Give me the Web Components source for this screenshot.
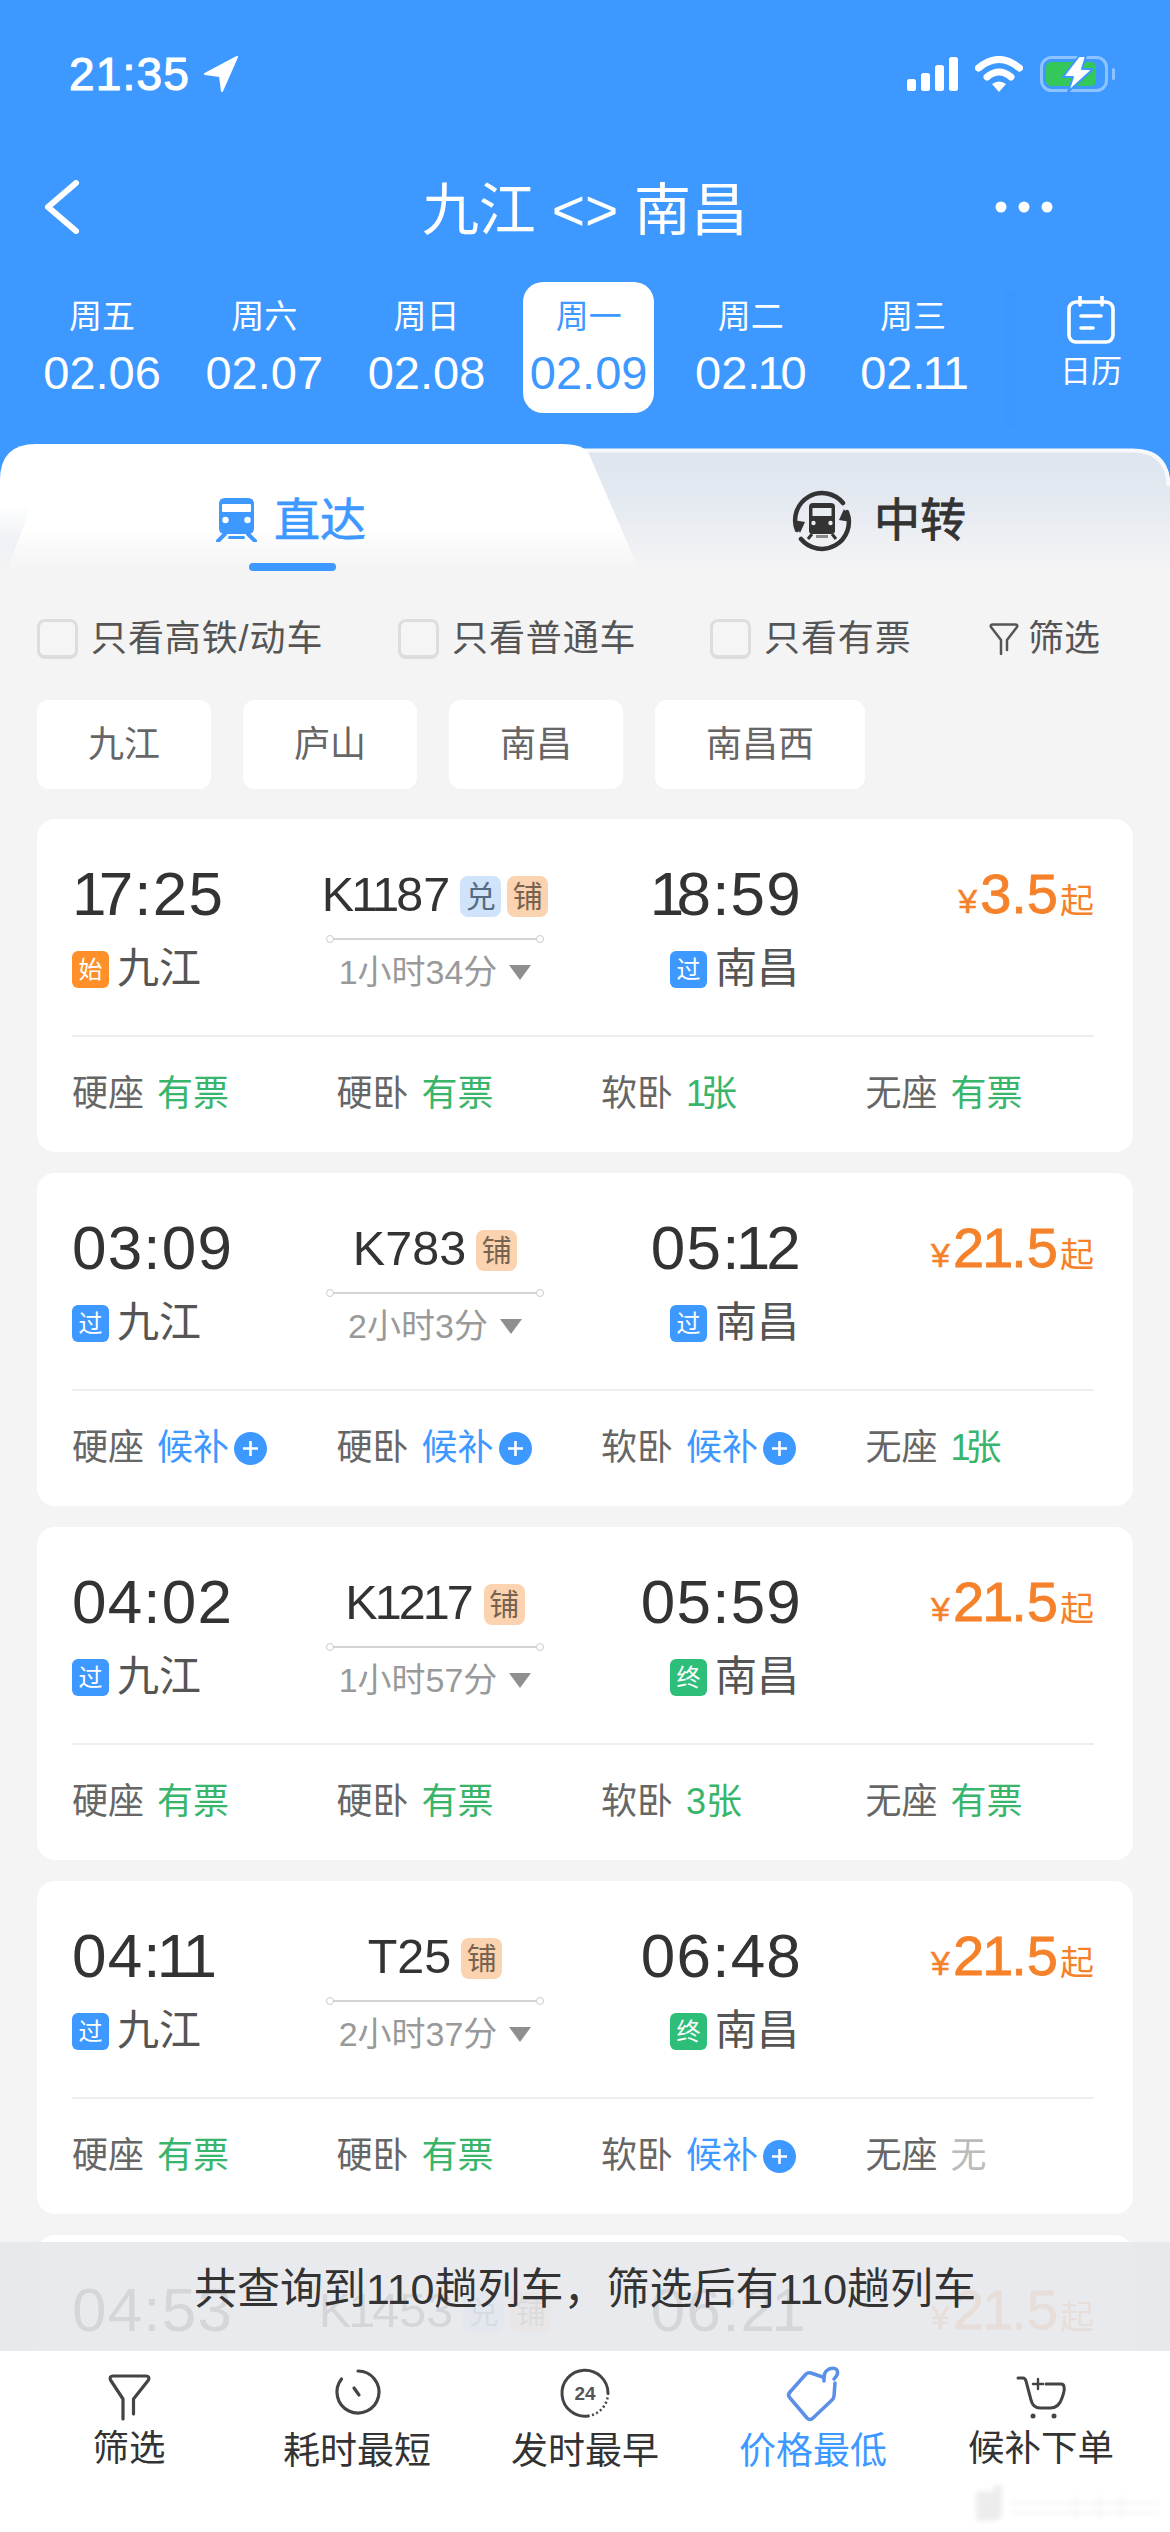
<!DOCTYPE html>
<html lang="zh">
<head>
<meta charset="utf-8">
<title>九江 - 南昌</title>
<style>
    html, body { margin: 0; padding: 0; }
    body {
        width: 1170px;
        height: 2532px;
        overflow: hidden;
        background: #f4f4f5;
        color: #333;
        font-family: "Liberation Sans", "Noto Sans CJK SC", sans-serif;
    }
    app-shell { --blue: #3d98ff; --green: #38b56b; --orange: #f5822a; }
</style>
</head>
<body>
<app-shell>
    <status-bar></status-bar>
    <nav-bar></nav-bar>
    <date-strip>
        <date-tab week="周五" date="02.06"></date-tab>
        <date-tab week="周六" date="02.07"></date-tab>
        <date-tab week="周日" date="02.08"></date-tab>
        <date-tab week="周一" date="02.09" selected></date-tab>
        <date-tab week="周二" date="02.10"></date-tab>
        <date-tab week="周三" date="02.11"></date-tab>
    </date-strip>
    <route-tabs></route-tabs>
    <filter-row>
        <check-item>只看高铁/动车</check-item>
        <check-item>只看普通车</check-item>
        <check-item>只看有票</check-item>
    </filter-row>
    <station-chips>
        <station-chip>九江</station-chip>
        <station-chip>庐山</station-chip>
        <station-chip>南昌</station-chip>
        <station-chip>南昌西</station-chip>
    </station-chips>
    <train-list>
        <train-card dep="17:25" arr="18:59" no="K1187" badges="兑,铺" from-tag="始" to-tag="过" dur="1小时34分" price="3.5">
            <seat-cell name="硬座" value="有票"></seat-cell>
            <seat-cell name="硬卧" value="有票"></seat-cell>
            <seat-cell name="软卧" value="1张"></seat-cell>
            <seat-cell name="无座" value="有票"></seat-cell>
        </train-card>
        <train-card dep="03:09" arr="05:12" no="K783" badges="铺" from-tag="过" to-tag="过" dur="2小时3分" price="21.5">
            <seat-cell name="硬座" value="候补" kind="wait"></seat-cell>
            <seat-cell name="硬卧" value="候补" kind="wait"></seat-cell>
            <seat-cell name="软卧" value="候补" kind="wait"></seat-cell>
            <seat-cell name="无座" value="1张"></seat-cell>
        </train-card>
        <train-card dep="04:02" arr="05:59" no="K1217" badges="铺" from-tag="过" to-tag="终" dur="1小时57分" price="21.5">
            <seat-cell name="硬座" value="有票"></seat-cell>
            <seat-cell name="硬卧" value="有票"></seat-cell>
            <seat-cell name="软卧" value="3张"></seat-cell>
            <seat-cell name="无座" value="有票"></seat-cell>
        </train-card>
        <train-card dep="04:11" arr="06:48" no="T25" badges="铺" from-tag="过" to-tag="终" dur="2小时37分" price="21.5">
            <seat-cell name="硬座" value="有票"></seat-cell>
            <seat-cell name="硬卧" value="有票"></seat-cell>
            <seat-cell name="软卧" value="候补" kind="wait"></seat-cell>
            <seat-cell name="无座" value="无" kind="none"></seat-cell>
        </train-card>
        <train-card dep="04:53" arr="06:21" no="K1453" badges="兑,铺" price="21.5"></train-card>
    </train-list>
    <bottom-dock>
        <sort-item label="筛选">
            <svg width="56" height="56" viewBox="0 0 56 56" fill="none" stroke="#444" stroke-width="3.2" stroke-linecap="round" stroke-linejoin="round"><path d="M22 53V33L9.500 14Q8 10 12 10H45Q49 10 47.500 14L32.500 33V48"/></svg>
        </sort-item>
        <sort-item label="耗时最短" low>
            <svg width="56" height="56" viewBox="0 0 56 56" fill="none" stroke="#444" stroke-width="3.200" stroke-linecap="round"><path d="M29 5A21 21 0 1 1 12.500 13"/><path d="M25 22L30 29"/></svg>
        </sort-item>
        <sort-item label="发时最早" low>
            <svg width="56" height="56" viewBox="0 0 56 56" fill="none" stroke="#444" stroke-width="3"><path d="M31 50A23 23 0 1 1 51 27" stroke-linecap="round"/><path d="M51 27A23 23 0 0 1 31 50" stroke-width="2.500" stroke-dasharray="2 2.500"/><text x="28" y="34" text-anchor="middle" font-size="19" font-weight="700" fill="#555" stroke="none" font-family="Liberation Sans, sans-serif">24</text></svg>
        </sort-item>
        <sort-item label="价格最低" low active>
            <svg width="56" height="56" viewBox="0 0 56 56" fill="none" stroke="#5b8fe8" stroke-width="3.500" stroke-linecap="round" stroke-linejoin="round"><path d="M5 26L21 8Q23 6 26 7L39 11.500"/><path d="M39 15Q38 6 44 3Q50 1 52 4Q54 8 49 13"/><path d="M50 17L49 30Q49 32 47 34L28 52Q25 55 22 52L5 32Q2 29 5 26"/></svg>
        </sort-item>
        <sort-item label="候补下单">
            <svg width="56" height="56" viewBox="0 0 56 56" fill="none" stroke="#444" stroke-width="3" stroke-linecap="round" stroke-linejoin="round"><path d="M5 12H10Q12 12 13 15L18 34Q20 42 27 42H37Q46 42 49 32Q52 24 51 21Q51 18 48 18H33"/><path d="M25 13V23M20 18H30" stroke-width="2.400"/><circle cx="20" cy="50" r="2.500" fill="#444" stroke="none"/><circle cx="41" cy="50" r="2.500" fill="#444" stroke="none"/></svg>
        </sort-item>
    </bottom-dock>
</app-shell>

<script>
// iOS digits have a narrow 1, Liberation's are all one width
const narrowOnes = (str) => str.replace(/1/g, (m, i) => `<span class="one${i === 0 ? ' lead' : ''}">1</span>`);

class AppShell extends HTMLElement {
    constructor() {
        super();
        this.attachShadow({ mode: 'open' }).innerHTML = `
            <style>
                :host { display: block; position: relative; width: 1170px; height: 2532px; overflow: hidden; background: #f4f4f5; }
            </style>
            <slot></slot>
        `;
    }
}

class StatusBar extends HTMLElement {
    constructor() {
        super();
        this.attachShadow({ mode: 'open' }).innerHTML = `
            <style>
                :host { display: flex; align-items: center; box-sizing: border-box; width: 1170px; height: 150px; padding: 0 55px 2px 69px; background: var(--blue); color: #fff; }
                .row { display: flex; align-items: center; }
                .time { font-size: 46px; letter-spacing: 1.2px; line-height: 40px; -webkit-text-stroke: 1.1px #fff; }
                .left { gap: 14px; }
                .right { margin-left: auto; }
                .wifi { margin-left: 17px; }
                .bat { margin-left: 17px; }
            </style>
            <div class="row left">
                <span class="time">21:35</span>
                <svg width="34" height="36" viewBox="0 0 34 36" fill="#fff" stroke="#fff" stroke-width="2" stroke-linejoin="round"><path d="M33 1L1 18L16 20L18 35Z"/></svg>
            </div>
            <div class="row right">
                <svg width="51" height="34" viewBox="0 0 51 34" fill="#fff"><rect x="0" y="22" width="9" height="12" rx="2.500"/><rect x="14" y="16" width="9" height="18" rx="2.500"/><rect x="28" y="8" width="9" height="26" rx="2.500"/><rect x="42" y="0" width="9" height="34" rx="2.500"/></svg>
                <svg class="wifi" width="48" height="36" viewBox="0 0 48 36" fill="none" stroke="#fff" stroke-width="7" stroke-linecap="round"><path d="M3.500 12Q24 -5 44.500 12"/><path d="M12 21Q24 11 36 21"/><path d="M17 28Q24 23 31 28L24 36Z" fill="#fff" stroke="none"/></svg>
                <svg class="bat" width="75" height="38" viewBox="0 0 75 38"><rect x="1.500" y="2.500" width="65" height="33" rx="10" fill="none" stroke="rgba(255,255,255,.42)" stroke-width="3"/><rect x="72" y="13" width="3" height="12" rx="1.500" fill="rgba(255,255,255,.42)"/><rect x="6" y="7" width="50" height="24" rx="5" fill="#34c759"/><path d="M39 1L23 22H33L28 37L53 14H42L46 1Z" fill="#fff" stroke="#3d98ff" stroke-width="2" stroke-linejoin="round"/></svg>
            </div>
        `;
    }
}

class NavBar extends HTMLElement {
    constructor() {
        super();
        this.attachShadow({ mode: 'open' }).innerHTML = `
            <style>
                :host { display: grid; grid-template-columns: 1fr auto 1fr; align-items: center; height: 114px; background: var(--blue); color: #fff; }
                .back { justify-self: start; margin-left: 43px; display: block; }
                .title { margin-top: 5px; font-size: 57px; line-height: 70px; white-space: pre; }
                .dots { justify-self: end; margin-right: 117px; display: block; }
            </style>
            <svg class="back" width="38" height="54" viewBox="0 0 38 54" fill="none" stroke="#fff" stroke-width="6" stroke-linecap="round" stroke-linejoin="round"><path d="M33 3L5 27L33 51"/></svg>
            <div class="title">九江 &lt;&gt; 南昌</div>
            <svg class="dots" width="58" height="12" viewBox="0 0 58 12" fill="#fff"><circle cx="6" cy="6" r="5.500"/><circle cx="29" cy="6" r="5.500"/><circle cx="52" cy="6" r="5.500"/></svg>
        `;
    }
}

class DateStrip extends HTMLElement {
    constructor() {
        super();
        this.attachShadow({ mode: 'open' }).innerHTML = `
            <style>
                :host { display: flex; box-sizing: border-box; width: 1170px; height: 180px; padding: 18px 0 0 21px; background: var(--blue); }
                .tabs { display: grid; grid-template-columns: repeat(6, 162.200px); height: 131px; }
                .cal { box-sizing: border-box; flex: 1; margin: 8px 0 17px 10px; color: #fff; display: flex; flex-direction: column; align-items: center; background: linear-gradient(90deg, rgba(20,80,170,0), rgba(20,80,170,.035) 4px, rgba(20,80,170,0) 16px); }
                .cal svg { display: block; margin-top: 6px; margin-left: 8px; }
                .cal span { display: block; margin-top: 11px; margin-left: 8px; font-size: 31px; line-height: 34px; }
            </style>
            <div class="tabs"><slot></slot></div>
            <div class="cal">
                <svg width="48" height="48" viewBox="0 0 48 48" fill="none" stroke="#fff" stroke-width="3.600" stroke-linecap="round"><rect x="2" y="6" width="44" height="40" rx="7"/><path d="M13 1V9M35 1V9M14 20H34M14 32H26"/></svg>
                <span>日历</span>
            </div>
        `;
    }
}

class DateTab extends HTMLElement {
    constructor() {
        super();
        this.attachShadow({ mode: 'open' }).innerHTML = `
            <style>
                :host { display: flex; justify-content: center; color: #fff; }
                .box { box-sizing: border-box; width: 131px; height: 131px; padding-top: 15px; border-radius: 20px; text-align: center; }
                :host([selected]) .box { background: #fff; color: var(--blue); }
                .week { font-size: 33px; line-height: 40px; }
                .date { margin-top: 13px; font-size: 47px; line-height: 46px; white-space: nowrap; }
                .one { margin: 0 -3px; }
            </style>
            <div class="box">
                <div class="week"></div>
                <div class="date"></div>
            </div>
        `;
    }

    connectedCallback() {
        this.shadowRoot.querySelector('.week').textContent = this.getAttribute('week');
        this.shadowRoot.querySelector('.date').innerHTML = narrowOnes(this.getAttribute('date'));
    }
}

class RouteTabs extends HTMLElement {
    constructor() {
        super();
        this.attachShadow({ mode: 'open' }).innerHTML = `
            <style>
                :host { display: grid; grid-template-columns: 600px 1fr; position: relative; height: 126px; background: var(--blue); }
                .bg { position: absolute; left: 0; top: 0; display: block; }
                .tab { position: relative; display: flex; height: 126px; box-sizing: border-box; align-items: flex-start; }
                .direct { padding: 54px 0 0 216px; gap: 17px; color: var(--blue); }
                .direct span { font-size: 46px; line-height: 44px; -webkit-text-stroke: .6px var(--blue); }
                .line { position: absolute; left: 249px; top: 119px; width: 87px; height: 8px; border-radius: 4px; background: var(--blue); }
                .transfer { padding: 46px 0 0 191px; gap: 21px; color: #333; }
                .transfer span { margin-top: 7px; font-size: 46px; line-height: 46px; -webkit-text-stroke: .8px #333; }
            </style>
            <svg class="bg" width="1170" height="126" viewBox="0 0 1170 126">
                <defs>
                    <linearGradient id="off" x1="0" y1="0" x2="0" y2="1">
                        <stop offset="0" stop-color="#dee5ef"/>
                        <stop offset=".45" stop-color="#e5eaf1"/>
                        <stop offset="1" stop-color="#f4f4f5"/>
                    </linearGradient>
                    <linearGradient id="on" x1="0" y1="0" x2="0" y2="1">
                        <stop offset="0" stop-color="#fff"/>
                        <stop offset=".66" stop-color="#fff"/>
                        <stop offset="1" stop-color="#f4f4f5"/>
                    </linearGradient>
                    <linearGradient id="fold" x1="0" y1="0" x2="0" y2="1">
                        <stop offset="0" stop-color="#eef1f5" stop-opacity="0"/>
                        <stop offset=".6" stop-color="#eef1f5"/>
                        <stop offset="1" stop-color="#f4f4f5"/>
                    </linearGradient>
                </defs>
                <path d="M0 126V42Q0 5 36 5H1134Q1170 5 1170 42V126Z" fill="url(#off)"/>
                <path d="M560 6.500H1132Q1168 6.500 1168.500 42" fill="none" stroke="#f6f8fb" stroke-width="4"/>
                <path d="M0 126V36Q0 0 36 0H562Q584 0 589 10L639 126Z" fill="url(#on)"/>
                <path d="M0 126V60H32L7 126Z" fill="url(#fold)"/>
            </svg>
            <div class="tab direct">
                <svg width="41" height="44" viewBox="0 0 41 44"><path d="M9 0H32Q38 0 38 6V30Q38 36 32 36H9Q3 36 3 30V6Q3 0 9 0Z" fill="#3d98ff"/><rect x="6" y="6" width="29" height="8" rx="1" fill="#fff"/><circle cx="9.500" cy="22" r="3.200" fill="#fff"/><circle cx="31.500" cy="22" r="3.200" fill="#fff"/><path d="M9 36L2 43M32 36L39 43" stroke="#3d98ff" stroke-width="4" stroke-linecap="round"/><rect x="12" y="38" width="17" height="3" rx="1.500" fill="#3d98ff"/></svg>
                <span>直达</span>
                <div class="line"></div>
            </div>
            <div class="tab transfer">
                <svg width="62" height="62" viewBox="0 0 62 62" fill="none" stroke="#333" stroke-width="4.500"><path d="M6 40A27 27 0 0 1 52 13" stroke-linecap="round"/><path d="M56 22A27 27 0 0 1 10 49" stroke-linecap="round"/><path d="M2 30L9 43L14 32Z" fill="#333" stroke="none"/><path d="M60 32L53 19L48 30Z" fill="#333" stroke="none"/><path d="M22 13H40Q44 13 44 17V41Q44 44 40 44H22Q18 44 18 41V17Q18 13 22 13Z" fill="#333" stroke="none"/><rect x="21.500" y="18" width="19" height="8" fill="#e9edf2" stroke="none"/><circle cx="22.500" cy="33" r="2.200" fill="#e9edf2" stroke="none"/><circle cx="39.500" cy="33" r="2.200" fill="#e9edf2" stroke="none"/><path d="M21 44L17 49M41 44L45 49" stroke-width="3"/><rect x="25" y="45" width="12" height="3" fill="#888" stroke="none"/></svg>
                <span>中转</span>
            </div>
        `;
    }
}

class FilterRow extends HTMLElement {
    constructor() {
        super();
        this.attachShadow({ mode: 'open' }).innerHTML = `
            <style>
                :host { display: grid; grid-template-columns: 361px 312px 279px auto; align-items: center; height: 40px; margin-top: 49px; padding-left: 37px; color: #555; }
                .more { display: flex; align-items: center; gap: 9px; font-size: 36px; line-height: 40px; white-space: nowrap; }
                svg { display: block; }
            </style>
            <slot></slot>
            <div class="more">
                <svg width="30" height="32" viewBox="0 0 30 32" fill="none" stroke="#555" stroke-width="2.500" stroke-linecap="round" stroke-linejoin="round"><path d="M12 31V17L2 4Q1 1.500 4 1.500H26Q29 1.500 28 4L18 17V27"/></svg>
                <span>筛选</span>
            </div>
        `;
    }
}

class CheckItem extends HTMLElement {
    constructor() {
        super();
        this.attachShadow({ mode: 'open' }).innerHTML = `
            <style>
                :host { display: flex; align-items: center; gap: 13px; font-size: 36px; line-height: 40px; letter-spacing: .9px; white-space: nowrap; }
                .box { box-sizing: border-box; width: 41px; height: 40px; border: 3px solid #ddd; border-bottom-width: 4px; border-radius: 8px; background: #f5f5f6; }
            </style>
            <div class="box"></div>
            <slot></slot>
        `;
    }
}

class StationChips extends HTMLElement {
    constructor() {
        super();
        this.attachShadow({ mode: 'open' }).innerHTML = `
            <style>
                :host { display: flex; gap: 32px; margin-top: 41px; padding-left: 37px; }
            </style>
            <slot></slot>
        `;
    }
}

class StationChip extends HTMLElement {
    constructor() {
        super();
        this.attachShadow({ mode: 'open' }).innerHTML = `
            <style>
                :host { display: block; height: 89px; padding: 0 51px; border-radius: 12px; background: #fff; color: #666; font-size: 36px; line-height: 89px; }
            </style>
            <slot></slot>
        `;
    }
}

class TrainList extends HTMLElement {
    constructor() {
        super();
        this.attachShadow({ mode: 'open' }).innerHTML = `
            <style>
                :host { display: flex; flex-direction: column; gap: 21px; margin-top: 30px; padding: 0 37px; }
            </style>
            <slot></slot>
        `;
    }
}

const TAG_COLORS = { '始': '#ff9029', '过': '#3d98ff', '终': '#2dbe7a' };
const BADGE_STYLES = {
    '兑': 'background:#cfe3fb;color:#566a82',
    '铺': 'background:#fbd3b0;color:#77634f'
};

class TrainCard extends HTMLElement {
    constructor() {
        super();
        this.attachShadow({ mode: 'open' }).innerHTML = `
            <style>
                :host { display: block; box-sizing: border-box; width: 1096px; height: 333px; padding: 48px 39px 0 35px; border-radius: 18px; background: #fff; }
                .top { display: grid; grid-template-columns: 203px 320px 204px 1fr; height: 168px; border-bottom: 2px solid #eee; }
                .col { display: flex; flex-direction: column; min-width: 0; }
                .time { font-size: 62px; line-height: 54px; letter-spacing: 1.200px; color: #333; white-space: nowrap; }
                .time .one { margin: 0 -5px; }
                .time .lead { margin: 0 -9px 0 0; }
                .right .time { margin-right: -3px; }
                .st { display: flex; align-items: center; gap: 8px; margin-top: 28px; height: 40px; font-size: 42px; line-height: 40px; color: #555; }
                .tag { width: 37px; height: 37px; border-radius: 6px; color: #fff; font-size: 24px; line-height: 37px; text-align: center; }
                .right { align-items: flex-end; }
                .mid { align-items: center; }
                .no { display: flex; align-items: center; gap: 6px; height: 54px; font-size: 48.500px; color: #333; white-space: nowrap; }
                .no b { margin-right: 4px; font-weight: 400; }
                .no .one { margin: 0 -3px; }
                .badge { width: 41px; height: 41px; margin-top: 4px; border-radius: 8px; font-size: 30px; line-height: 41px; text-align: center; }
                .rail { position: relative; width: 206px; height: 2px; margin-top: 17px; background: #d4d4d4; }
                .rail::before, .rail::after { content: ""; position: absolute; top: -3px; box-sizing: border-box; width: 8px; height: 8px; border: 1.500px solid #ccc; border-radius: 50%; background: #fff; }
                .rail::before { left: -6px; }
                .rail::after { right: -6px; }
                .dur { display: flex; align-items: center; gap: 12px; margin-top: 12px; font-size: 34px; line-height: 40px; color: #999; white-space: nowrap; }
                .dur i { width: 0; height: 0; border: 11px solid transparent; border-top: 15px solid #8f8f8f; border-bottom: 0; }
                .price { display: flex; justify-content: flex-end; align-items: baseline; height: 54px; line-height: 54px; color: var(--orange); white-space: nowrap; }
                .price .y { font-size: 34px; margin-right: 3px; -webkit-text-stroke: .5px var(--orange); }
                .price .n { font-size: 56px; -webkit-text-stroke: .8px var(--orange); }
                .price .n .one { margin: 0 -2px; }
                .price .q { font-size: 34px; margin-left: 2px; }
                .seats { display: grid; grid-template-columns: 264.500px 264.500px 264.500px 1fr; width: 1058px; height: 114px; align-items: center; }
            </style>
            <div class="top">
                <div class="col">
                    <div class="time dep"></div>
                    <div class="st from"></div>
                </div>
                <div class="col mid">
                    <div class="no"></div>
                    <div class="detail"></div>
                </div>
                <div class="col right">
                    <div class="time arr"></div>
                    <div class="st to"></div>
                </div>
                <div class="col">
                    <div class="price"><span class="y">¥</span><span class="n"></span><span class="q">起</span></div>
                </div>
            </div>
            <div class="seats"><slot></slot></div>
        `;
    }

    connectedCallback() {
        const root = this.shadowRoot;
        root.querySelector('.dep').innerHTML = narrowOnes(this.getAttribute('dep'));
        root.querySelector('.arr').innerHTML = narrowOnes(this.getAttribute('arr'));
        root.querySelector('.n').innerHTML = narrowOnes(this.getAttribute('price'));

        const badges = (this.getAttribute('badges') || '').split(',');
        root.querySelector('.no').innerHTML = `<b>${narrowOnes(this.getAttribute('no'))}</b>` + badges
            .map(b => `<span class="badge" style="${BADGE_STYLES[b]}">${b}</span>`)
            .join('');

        // the last card sits under the dock, only its top row shows
        const dur = this.getAttribute('dur');
        if (!dur) return;
        const detail = root.querySelector('.detail');
        detail.style.display = 'contents';
        detail.innerHTML = `<div class="rail"></div><div class="dur"><span>${dur}</span><i></i></div>`;
        this.fillStation(root.querySelector('.from'), this.getAttribute('from-tag'), '九江');
        this.fillStation(root.querySelector('.to'), this.getAttribute('to-tag'), '南昌');
    }

    fillStation(el, tag, name) {
        el.innerHTML = `<span class="tag" style="background:${TAG_COLORS[tag]}">${tag}</span><span>${name}</span>`;
    }
}

class SeatCell extends HTMLElement {
    constructor() {
        super();
        this.attachShadow({ mode: 'open' }).innerHTML = `
            <style>
                :host { display: flex; align-items: center; gap: 13px; font-size: 36px; line-height: 40px; color: #666; white-space: nowrap; }
                .val { color: var(--green); }
                .lead { margin-right: -5px; }
                :host([kind="wait"]) .val { color: var(--blue); }
                :host([kind="none"]) .val { color: #bbb; }
                svg { display: none; margin-left: -8px; }
                :host([kind="wait"]) svg { display: block; }
            </style>
            <span class="name"></span>
            <span class="val"></span>
            <svg width="33" height="33" viewBox="0 0 33 33"><circle cx="16.500" cy="16.500" r="16.500" fill="#3d98ff"/><path d="M16.500 9V24M9 16.500H24" stroke="#fff" stroke-width="2.600"/></svg>
        `;
    }

    connectedCallback() {
        this.shadowRoot.querySelector('.name').textContent = this.getAttribute('name');
        this.shadowRoot.querySelector('.val').innerHTML = narrowOnes(this.getAttribute('value'));
    }
}

class BottomDock extends HTMLElement {
    constructor() {
        super();
        this.attachShadow({ mode: 'open' }).innerHTML = `
            <style>
                :host { display: block; position: absolute; left: 0; right: 0; bottom: 0; }
                .toast { box-sizing: border-box; height: 109px; padding-top: 18px; background: rgba(230,232,236,.9); color: #333; font-size: 43px; line-height: 58px; text-align: center; white-space: nowrap; }
                .bar { position: relative; display: grid; grid-template-columns: repeat(5, 228px); height: 181px; padding: 0 15px; background: #fff; }
                .mark { position: absolute; left: 970px; top: 132px; display: block; }
            </style>
            <div class="toast">共查询到110趟列车，筛选后有110趟列车</div>
            <div class="bar">
                <slot></slot>
                <svg class="mark" width="200" height="42" viewBox="0 0 200 42">
                    <defs><filter id="soft"><feGaussianBlur stdDeviation="2.500"/></filter></defs>
                    <g filter="url(#soft)" fill="#000" opacity=".07">
                        <rect x="6" y="8" width="20" height="30"/>
                        <rect x="24" y="2" width="8" height="34"/>
                        <rect x="40" y="18" width="150" height="3" opacity=".6"/>
                        <rect x="40" y="28" width="150" height="3" opacity=".6"/>
                        <rect x="104" y="12" width="3" height="24" opacity=".5"/>
                        <rect x="128" y="12" width="3" height="24" opacity=".5"/>
                        <rect x="150" y="12" width="3" height="24" opacity=".5"/>
                    </g>
                </svg>
            </div>
        `;
    }
}

class SortItem extends HTMLElement {
    constructor() {
        super();
        this.attachShadow({ mode: 'open' }).innerHTML = `
            <style>
                :host { display: flex; flex-direction: column; align-items: center; padding-top: 15px; color: #333; }
                :host([active]) { color: var(--blue); }
                .label { margin-top: 5px; font-size: 36.500px; line-height: 44px; white-space: nowrap; }
                :host([low]) .label { margin-top: 8px; font-size: 37px; }
                ::slotted(svg) { display: block; overflow: visible; }
            </style>
            <slot></slot>
            <div class="label"></div>
        `;
    }

    connectedCallback() {
        this.shadowRoot.querySelector('.label').textContent = this.getAttribute('label');
    }
}

customElements.define('app-shell', AppShell);
customElements.define('status-bar', StatusBar);
customElements.define('nav-bar', NavBar);
customElements.define('date-strip', DateStrip);
customElements.define('date-tab', DateTab);
customElements.define('route-tabs', RouteTabs);
customElements.define('filter-row', FilterRow);
customElements.define('check-item', CheckItem);
customElements.define('station-chips', StationChips);
customElements.define('station-chip', StationChip);
customElements.define('train-list', TrainList);
customElements.define('train-card', TrainCard);
customElements.define('seat-cell', SeatCell);
customElements.define('bottom-dock', BottomDock);
customElements.define('sort-item', SortItem);
</script>
</body>
</html>
